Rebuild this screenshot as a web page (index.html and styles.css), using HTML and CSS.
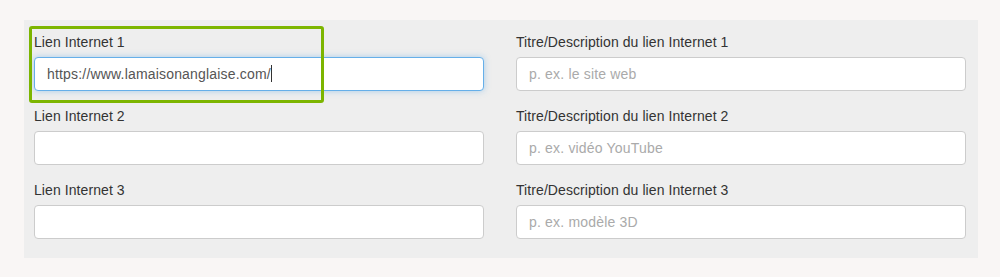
FILE: index.html
```html
<!DOCTYPE html>
<html lang="fr">
<head>
    <meta charset="UTF-8">
    <title>Liens Internet</title>
    <link rel="stylesheet" href="styles.css">
</head>
<body>

    <!-- LINKS PANEL -->
    <div class="panel">
        <div class="form-group">
            <label>Lien Internet 1</label>
            <div class="form-control focused">https://www.lamaisonanglaise.com/<span class="caret"></span></div>
        </div>
        <div class="form-group">
            <label>Titre/Description du lien Internet 1</label>
            <div class="form-control placeholder">p. ex. le site web</div>
        </div>
        <div class="form-group">
            <label>Lien Internet 2</label>
            <div class="form-control"></div>
        </div>
        <div class="form-group">
            <label>Titre/Description du lien Internet 2</label>
            <div class="form-control placeholder">p. ex. vidéo YouTube</div>
        </div>
        <div class="form-group">
            <label>Lien Internet 3</label>
            <div class="form-control"></div>
        </div>
        <div class="form-group">
            <label>Titre/Description du lien Internet 3</label>
            <div class="form-control placeholder">p. ex. modèle 3D</div>
        </div>

        <!-- highlight over first field -->
        <div class="highlight"></div>
    </div>

</body>
</html>
```

FILE: styles.css
```css
* { margin: 0; padding: 0; box-sizing: border-box; }
body {
    background: #f9f6f5;
    font-family: "Liberation Sans", Arial, sans-serif;
    font-size: 14px;
    color: #333;
}
.panel {
    position: relative;
    width: 954px;
    margin: 20px 0 0 24px;
    background: #eeeeee;
    padding: 12px 12px 4px 10px;
    display: grid;
    grid-template-columns: 450px 450px;
    column-gap: 32px;
}
.form-group { margin-bottom: 15px; }
label {
    display: block;
    line-height: 20px;
    margin-bottom: 5px;
    color: #333;
    letter-spacing: 0.08px;
}
.form-control {
    height: 34px;
    background: #fff;
    border: 1px solid #ccc;
    border-radius: 4px;
    padding: 0 12px;
    line-height: 32px;
    color: #555;
    white-space: nowrap;
    letter-spacing: 0.18px;
}
.form-control.placeholder { color: #aaa; }
.form-control.focused {
    border-color: #66afe9;
    box-shadow: 0 0 6px rgba(102, 175, 233, 0.5);
}
.caret {
    display: inline-block;
    width: 1px;
    height: 17px;
    background: #333;
    vertical-align: -3px;
}
.highlight {
    position: absolute;
    left: 5px;
    top: 6px;
    width: 295px;
    height: 77px;
    border: 3px solid #7cb500;
    border-radius: 3px;
}
```
